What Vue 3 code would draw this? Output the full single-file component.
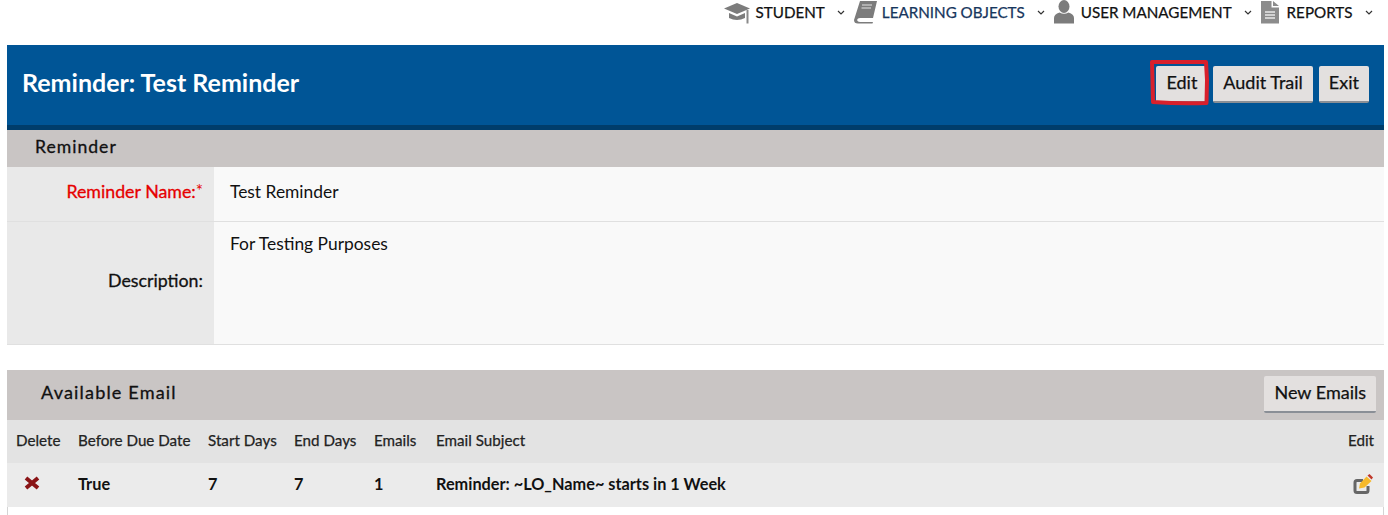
<template>
  <div class="page">
    <nav class="topnav">
      <a v-for="item in navItems" :key="item.label" :class="['nav-item', item.cls, { current: item.current }]">
        <svg v-if="item.icon === 'cap'" class="nav-icon cap" viewBox="0 0 26 24">
          <path d="M13 3 L26 8.5 L13 14 L0 8.5 Z" fill="#7c7c7c" />
          <path d="M5 13 L13 16.5 L21 13 L21 18 Q13 22 5 18 Z" fill="#7c7c7c" />
          <path d="M23.5 10 L23.5 23.5" stroke="#8a8a8a" stroke-width="2" fill="none" />
        </svg>
        <svg v-else-if="item.icon === 'book'" class="nav-icon book" viewBox="0 0 23 24">
          <path d="M6 1 H23 L19 18 H6 Q3.5 18 3 20 Q3.5 22 6 22 H19 L18.5 23.5 H4 Q0 23.5 0 20 Z" fill="#7c7c7c" />
          <path d="M8 5 H18 M7.5 8 H17" stroke="#e4e4e4" stroke-width="1.2" fill="none" />
        </svg>
        <svg v-else-if="item.icon === 'user'" class="nav-icon user" viewBox="0 0 20 24">
          <ellipse cx="10" cy="6.5" rx="5.5" ry="6.5" fill="#7c7c7c" />
          <path d="M0 23.5 V18 Q0 14 5.5 12.5 Q10 15 14.5 12.5 Q20 14 20 18 V23.5 Z" fill="#7c7c7c" />
        </svg>
        <svg v-else class="nav-icon doc" viewBox="0 0 18 24">
          <path d="M0 1 H10.5 V7.5 H18 V23.5 H0 Z" fill="#8c8c8c" />
          <path d="M12 1 L18 6 H12 Z" fill="#8c8c8c" />
          <path d="M4 12 H14 M4 15 H14 M4 18 H14" stroke="#e8e8e8" stroke-width="1.3" fill="none" />
        </svg>
        <span class="nav-label">{{ item.label }}</span>
        <svg class="chevron" viewBox="0 0 8 5">
          <path d="M1 1 L4 4 L7 1" stroke="#333" stroke-width="1.2" fill="none" />
        </svg>
      </a>
    </nav>

    <main class="content">
      <header class="title-bar">
        <h1>Reminder: Test Reminder</h1>
        <div class="title-actions">
          <span class="marked">
            <button class="btn">Edit</button>
            <svg class="scribble" viewBox="0 0 60 46">
              <path d="M2 2 L56 2 L57 20 L56.5 43 Q30 44 3 42 L2.5 20 Z" fill="none" stroke="#d8202c" stroke-width="4" stroke-linejoin="round" />
            </svg>
          </span>
          <button class="btn">Audit Trail</button>
          <button class="btn">Exit</button>
        </div>
      </header>

      <section class="form-section">
        <h2 class="section-head">Reminder</h2>
        <div class="form-row name-row">
          <label class="required">Reminder Name:<sup>*</sup></label>
          <div class="value">Test Reminder</div>
        </div>
        <div class="form-row desc-row">
          <label>Description:</label>
          <div class="value">For Testing Purposes</div>
        </div>
      </section>

      <section class="email-section">
        <div class="email-head">
          <h2>Available Email</h2>
          <button class="btn">New Emails</button>
        </div>
        <table class="email-table">
          <thead>
            <tr>
              <th class="c-delete">Delete</th>
              <th class="c-before">Before Due Date</th>
              <th class="c-start">Start Days</th>
              <th class="c-end">End Days</th>
              <th class="c-emails">Emails</th>
              <th>Email Subject</th>
              <th class="c-edit">Edit</th>
            </tr>
          </thead>
          <tbody>
            <tr v-for="row in emails" :key="row.subject">
              <td class="c-delete">
                <svg class="x-icon" viewBox="0 0 16 14">
                  <path d="M2 2 L14 12 M14 2 L2 12" stroke="#8a1416" stroke-width="4" fill="none" />
                </svg>
              </td>
              <td>{{ row.before }}</td>
              <td>{{ row.start }}</td>
              <td>{{ row.end }}</td>
              <td>{{ row.count }}</td>
              <td>{{ row.subject }}</td>
              <td class="c-edit">
                <svg class="edit-icon" viewBox="0 0 20 20">
                  <path d="M10 6.5 H4 Q2 6.5 2 8.5 V16.5 Q2 18.5 4 18.5 H13 Q15 18.5 15 16.5 V12" fill="none" stroke="#666" stroke-width="3" />
                  <path d="M6 14.5 L7 9.5 L13.5 2.5 L18.5 7 L11.5 13.5 Z" fill="#f6b92b" />
                  <path d="M14.5 1.5 L16.5 0 L20 3.5 L18.5 5.5 Z" fill="#c0392b" />
                </svg>
              </td>
            </tr>
          </tbody>
        </table>
        <div class="table-rest"></div>
      </section>
    </main>
  </div>
</template>

<script setup>
const navItems = [
  { label: 'STUDENT', icon: 'cap', cls: 'student' },
  { label: 'LEARNING OBJECTS', icon: 'book', cls: 'learning', current: true },
  { label: 'USER MANAGEMENT', icon: 'user', cls: 'users' },
  { label: 'REPORTS', icon: 'doc', cls: 'reports' }
]

const emails = [
  { before: 'True', start: 7, end: 7, count: 1, subject: 'Reminder: ~LO_Name~ starts in 1 Week' }
]
</script>

<style>
html,
body {
  margin: 0;
  background: #fff;
  overflow: hidden;
}
</style>

<style scoped>
.page {
  width: 1388px;
  height: 515px;
  overflow: hidden;
  font-family: Lato, "Open Sans", sans-serif;
  color: #111;
  background: #fff;
}

.topnav {
  height: 45px;
  display: flex;
  justify-content: flex-end;
  padding-right: 6.5px;
  box-sizing: border-box;
}

.nav-item {
  display: flex;
  align-items: center;
  height: 24px;
  font-size: 15.2px;
  color: #111;
  -webkit-text-stroke: 0.25px currentColor;
}

.nav-item.current {
  color: #17365d;
}

.nav-icon {
  display: block;
  flex: none;
}

.cap { width: 26px; height: 24px; margin-right: 6px; }
.book { width: 23px; height: 24px; margin-right: 5px; }
.user { width: 20px; height: 24px; margin-right: 7px; }
.doc { width: 18px; height: 24px; margin-right: 8px; }

.chevron {
  width: 8px;
  height: 5px;
  margin: 1px 9px 0 12px;
}

.content {
  margin: 0 4px 0 7px;
}

.title-bar {
  height: 80px;
  border-bottom: 5px solid #003d6b;
  background: #005596;
  display: flex;
  align-items: center;
  justify-content: space-between;
  padding: 0 15px 0 15px;
}

.title-bar h1 {
  margin: 0 0 7px;
  font-size: 25px;
  font-weight: 700;
  color: #fff;
}

.title-actions {
  display: flex;
  gap: 6px;
  margin: 0 0 1px;
}

.marked {
  position: relative;
  display: block;
}

.scribble {
  position: absolute;
  left: -6px;
  top: -6px;
  width: 60px;
  height: 46px;
}

.btn {
  height: 37px;
  padding: 0 10px 3px;
  border: 0;
  border-bottom: 2px solid #8a8f96;
  border-radius: 2px;
  background: #e3e0df;
  font-family: inherit;
  font-size: 18px;
  color: #111;
  -webkit-text-stroke: 0.25px currentColor;
}

.section-head {
  margin: 0;
  height: 37px;
  line-height: 33px;
  padding-left: 28px;
  background: #c9c5c4;
  font-size: 17.6px;
  font-weight: 400;
  letter-spacing: 1px;
  -webkit-text-stroke: 0.3px currentColor;
}

.form-row {
  display: grid;
  grid-template-columns: 207px 1fr;
  font-size: 17.4px;
  border-bottom: 1px solid #e0e0e0;
  box-sizing: border-box;
}

.form-row label {
  background: #e9e9e9;
  display: flex;
  align-items: center;
  justify-content: flex-end;
  padding: 0 11px 6px 0;
  font-size: 17.8px;
  -webkit-text-stroke: 0.3px currentColor;
}

.form-row .value {
  background: #f9f9f9;
  padding-left: 16px;
}

.form-row label.required {
  color: #e60000;
}

.form-row sup {
  font-size: 17px;
  line-height: 0;
  -webkit-text-stroke: 0;
}

.name-row {
  height: 55px;
}

.name-row .value {
  line-height: 49px;
}

.desc-row {
  height: 123px;
}

.desc-row .value {
  padding-top: 11px;
  line-height: 21px;
}

.email-section {
  margin-top: 25px;
}

.email-head {
  height: 50px;
  background: #c9c5c4;
  display: flex;
  align-items: center;
  justify-content: space-between;
  padding: 0 8px 0 34px;
}

.email-head h2 {
  margin: 0 0 6px;
  font-size: 18.1px;
  font-weight: 400;
  letter-spacing: 1.15px;
  -webkit-text-stroke: 0.3px currentColor;
}

.email-head .btn {
  margin-bottom: 2px;
}

.email-table {
  width: 100%;
  border-collapse: collapse;
  table-layout: fixed;
  font-size: 15.2px;
}

.email-table th {
  height: 40px;
  padding: 0 0 3px;
  background: #e3e3e3;
  text-align: left;
  font-weight: 400;
  color: #222;
  -webkit-text-stroke: 0.25px currentColor;
}

.email-table td {
  height: 40px;
  padding: 0 0 4px;
  background: #ebebeb;
  font-size: 16.3px;
  font-weight: 700;
}

.email-table th:first-child,
.email-table td:first-child {
  padding-left: 9px;
}

.c-delete { width: 62px; }
.c-before { width: 130px; }
.c-start { width: 86px; }
.c-end { width: 80px; }
.c-emails { width: 62px; }
.c-edit { width: 60px; }

.email-table th.c-edit {
  text-align: right;
  padding-right: 10px;
}

.email-table td.c-edit {
  text-align: right;
  padding-right: 11px;
}

.table-rest {
  height: 10px;
  border-left: 1px solid #d4d4d4;
  border-right: 1px solid #d4d4d4;
}

.x-icon {
  display: block;
  width: 16px;
  height: 14px;
  margin: 0 0 0 8px;
}

.edit-icon {
  display: inline-block;
  width: 20px;
  height: 20px;
  vertical-align: middle;
}
</style>
